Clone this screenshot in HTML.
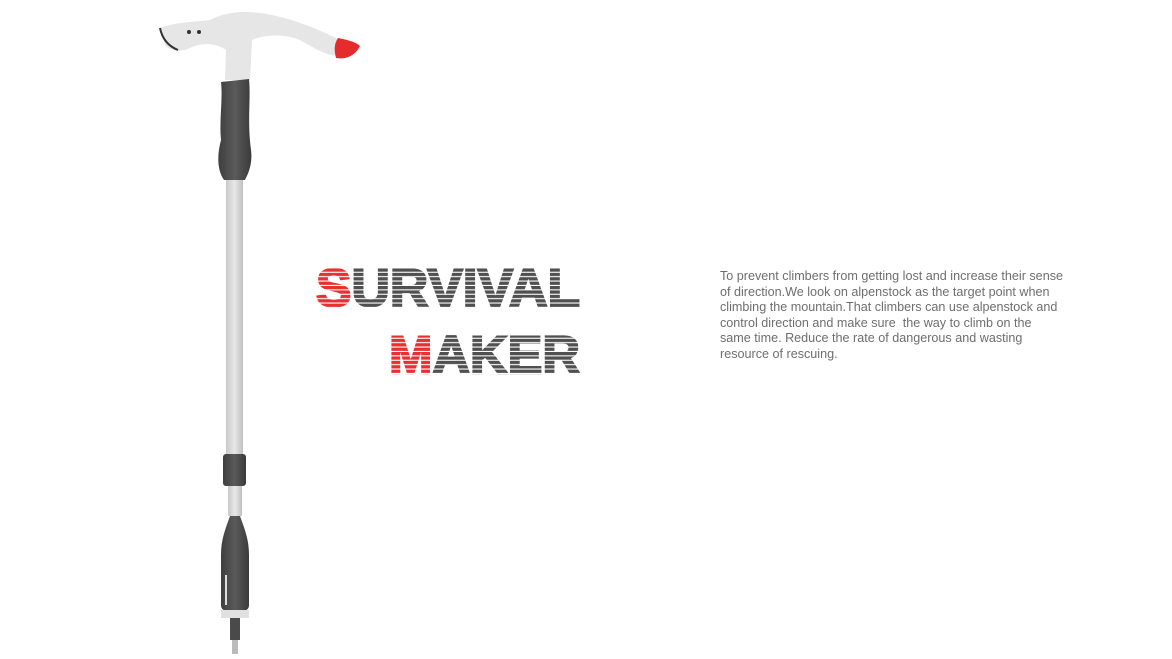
<!DOCTYPE html>
<html><head><meta charset="utf-8"><style>
html,body{margin:0;padding:0;background:#fff;width:1172px;height:659px;overflow:hidden;position:relative;font-family:"Liberation Sans",sans-serif}
.p{position:absolute;left:720px;top:269px;width:400px;white-space:nowrap;font-size:12.6px;line-height:15.5px;color:#6e6e6e}
svg{position:absolute;left:0;top:0}
</style></head><body>
<svg width="1172" height="659" viewBox="0 0 1172 659">
<defs>
<pattern id="g" width="4" height="4.4" patternUnits="userSpaceOnUse"><rect width="4" height="4.4" fill="#fff"/><rect width="4" height="3.3" fill="#505050"/></pattern>
<pattern id="r" width="4" height="4.4" patternUnits="userSpaceOnUse"><rect width="4" height="4.4" fill="#fff"/><rect width="4" height="3.3" fill="#e8302f"/></pattern>
<linearGradient id="sh" x1="0" x2="1"><stop offset="0" stop-color="#c8c8c8"/><stop offset=".5" stop-color="#e8e8e8"/><stop offset="1" stop-color="#c0c0c0"/></linearGradient>
<linearGradient id="dk" x1="0" x2="1"><stop offset="0" stop-color="#3e3e3e"/><stop offset=".5" stop-color="#5a5a5a"/><stop offset="1" stop-color="#3a3a3a"/></linearGradient>
</defs>
<path d="M160 28 C175 22 195 22 210 20 C220 15 230 12 245 12 C275 12 310 25 340 40 L345 55 C332 58 320 52 300 40 C285 34 265 34 252 40 L250 80 L225 80 L226 50 C215 42 200 43 190 48 C182 52 172 52 165 45 Z" fill="#e6e6e6"/>
<path d="M338 38 C348 40 356 42 360 46 C356 54 348 60 336 58 C334 50 334 44 338 38Z" fill="#e52b2b"/>
<path d="M160 28 C162 38 168 46 178 50" stroke="#333" stroke-width="2" fill="none"/>
<circle cx="189" cy="32" r="2" fill="#333"/><circle cx="199" cy="32" r="2" fill="#333"/>
<path d="M221 82 L249 79 C251 100 247 120 251 150 C253 165 247 176 245 180 L224 180 C217 170 217 155 221 140 C219 120 223 100 221 82Z" fill="url(#dk)"/>
<rect x="226" y="180" width="17" height="275" fill="url(#sh)"/>
<rect x="223" y="454" width="23" height="32" rx="3" fill="url(#dk)"/>
<rect x="228" y="486" width="14" height="30" fill="url(#sh)"/>
<path d="M230 516 L240 516 C245 530 249 540 249 555 L249 605 C249 610 245 612 235 612 C225 612 221 610 221 605 L221 555 C221 540 225 530 230 516Z" fill="url(#dk)"/>
<rect x="221" y="610" width="28" height="8" fill="#e0e0e0"/>
<rect x="230" y="618" width="10" height="22" fill="#4a4a4a"/>
<rect x="232" y="640" width="6" height="14" fill="#bbb"/>
<rect x="225" y="575" width="2" height="30" fill="#ddd"/>
<text x="316" y="306" font-family="Liberation Sans" font-weight="bold" font-size="53" textLength="264" lengthAdjust="spacingAndGlyphs" stroke-width="2.2"><tspan fill="url(#r)" stroke="url(#r)">S</tspan><tspan fill="url(#g)" stroke="url(#g)">URVIVAL</tspan></text>
<text x="389" y="373" font-family="Liberation Sans" font-weight="bold" font-size="53" textLength="191" lengthAdjust="spacingAndGlyphs" stroke-width="2.2"><tspan fill="url(#r)" stroke="url(#r)">M</tspan><tspan fill="url(#g)" stroke="url(#g)">AKER</tspan></text>
</svg>
<div class="p">To prevent climbers from getting lost and increase their sense<br>of direction.We look on alpenstock as the target point when<br>climbing the mountain.That climbers can use alpenstock and<br>control direction and make sure&nbsp; the way to climb on the<br>same time. Reduce the rate of dangerous and wasting<br>resource of rescuing.</div>
</body></html>
